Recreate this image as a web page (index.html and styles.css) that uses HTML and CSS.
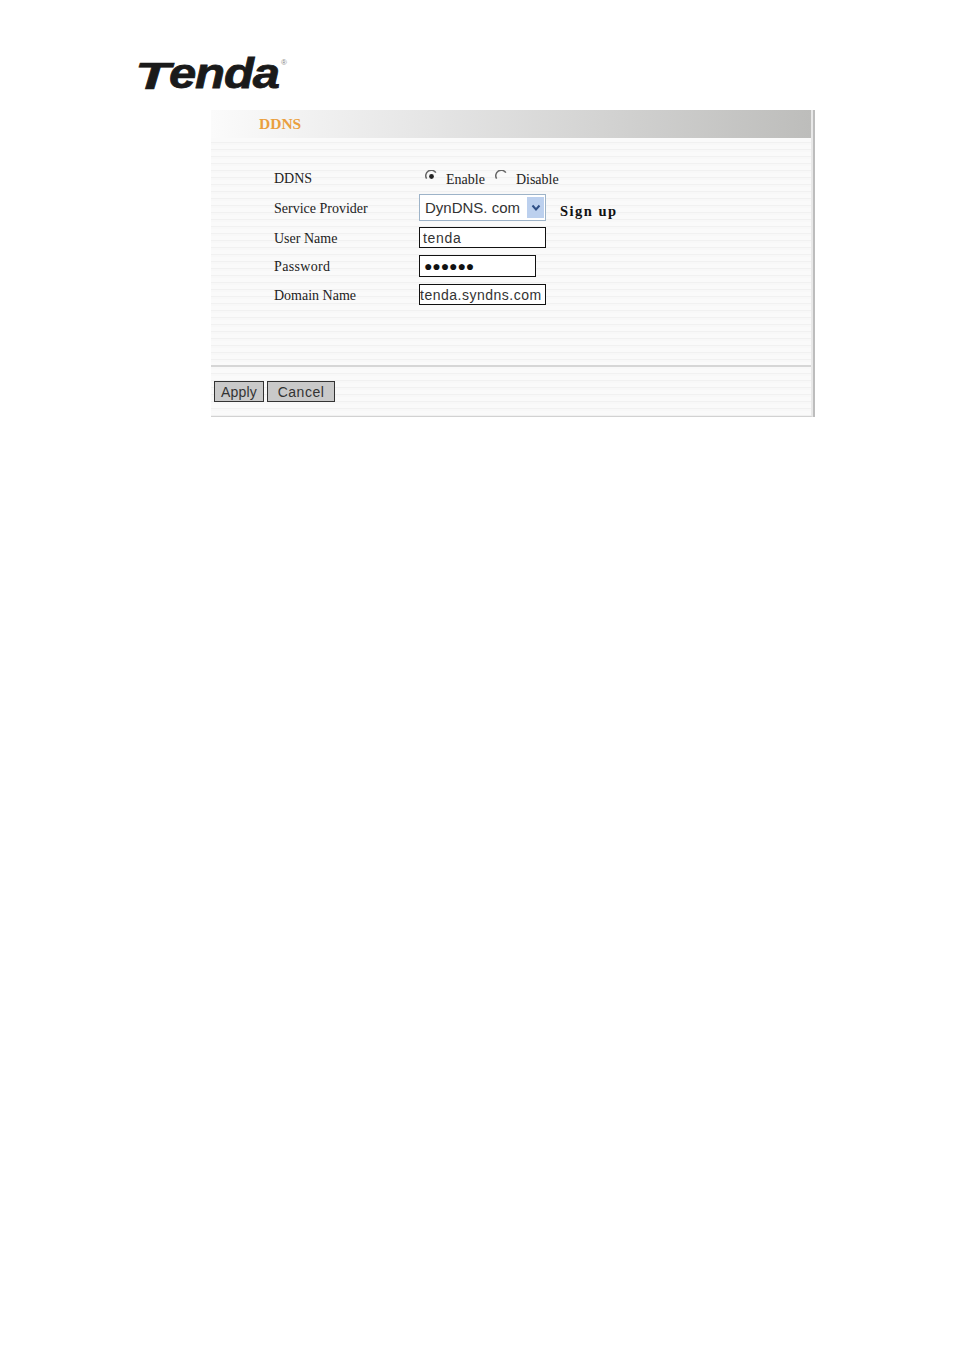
FILE: index.html
```html
<!DOCTYPE html>
<html lang="en">
<head>
  <meta charset="UTF-8" />
  <title>DDNS - Tenda</title>
  <link rel="stylesheet" href="styles.css">
</head>
<body>
  <div class="logo"><span class="logo-t">T</span><span class="logo-text">enda</span><span class="logo-mark">®</span></div>

  <div class="panel">
    <div class="panel-head">DDNS</div>

    <div class="form">
      <div class="row row-radio">
        <div class="label">DDNS</div>
        <div class="radios">
          <svg class="radio" viewBox="0 0 12 12"><path d="M10 2.5A5 5 0 0 0 1.5 8" /><circle cx="6" cy="6" r="2.2" /></svg>
          <span class="radio-text">Enable</span>
          <svg class="radio radio-off" viewBox="0 0 12 12"><path d="M10 2.5A5 5 0 0 0 1.5 8" /></svg>
          <span class="radio-text">Disable</span>
        </div>
      </div>

      <div class="row row-select">
        <div class="label">Service Provider</div>
        <div class="select">
          <span class="select-value">DynDNS. com</span>
          <span class="select-btn">
            <svg viewBox="0 0 10 8"><path d="M1.5 1.5 5 5.5 8.5 1.5" /></svg>
          </span>
        </div>
        <a class="signup">Sign up</a>
      </div>

      <div class="row row-user">
        <div class="label">User Name</div>
        <div class="input input-user">tenda</div>
      </div>

      <div class="row row-pass">
        <div class="label label-pass">Password</div>
        <div class="input input-short">●●●●●●</div>
      </div>

      <div class="row row-domain">
        <div class="label">Domain Name</div>
        <div class="input input-tight">tenda.syndns.com</div>
      </div>
    </div>

    <div class="actions">
      <div class="btn btn-apply">Apply</div>
      <div class="btn btn-cancel">Cancel</div>
    </div>
  </div>
</body>
</html>
```

FILE: styles.css
```css
html, body {
  margin: 0;
  background: #fff;
}
body {
  height: 1350px;
  padding: 50px 0 0 138px;
  box-sizing: border-box;
  color: #222;
  font-family: "Liberation Serif", serif;
  overflow: hidden;
}

.logo {
  display: flex;
  align-items: flex-end;
  height: 60px;
  width: 160px;
  padding-bottom: 15px;
  box-sizing: border-box;
  font-family: "Liberation Sans", sans-serif;
  font-weight: bold;
  font-style: italic;
  color: #1a1a1a;
}
.logo-t {
  display: block;
  width: 22px;
  margin: 0 12px 0 -3px;
  font-size: 36px;
  line-height: 36px;
  transform: scaleX(1.6);
  transform-origin: left bottom;
  -webkit-text-stroke: 0.6px #1a1a1a;
}
.logo-text {
  display: block;
  width: 99px;
  margin-right: 14px;
  font-size: 43px;
  line-height: 43px;
  letter-spacing: -1px;
  transform: scaleX(1.14);
  transform-origin: left bottom;
  -webkit-text-stroke: 0.8px #1a1a1a;
}
.logo-mark {
  align-self: flex-start;
  margin: 8px 0 0 -1px;
  font-size: 8px;
  font-style: normal;
  font-weight: normal;
  color: #888;
}

.panel {
  width: 600px;
  height: 306px;
  margin-left: 73px;
  border-right: 2px solid #e8e8e8;
  border-bottom: 1px solid #d2d2d2;
  box-shadow: 2px 0 0 #bdbdbd;
  background: repeating-linear-gradient(#fafafa 0 4px, #f1f1f1 4px 5px, #f8f8f8 5px 7px);
}
.panel-head {
  height: 28px;
  padding-left: 48px;
  font-size: 15.5px;
  font-weight: bold;
  line-height: 28px;
  color: #ea9f3e;
  background: linear-gradient(to right, #fbfbfb, #e6e6e6 35%, #bdbdbb 100%);
}

.form {
  height: 229px;
  box-sizing: border-box;
  padding-top: 26px;
  padding-left: 63px;
  border-bottom: 2px solid #d6d6d6;
}
.row {
  display: flex;
  align-items: center;
}
.row-radio { height: 27px; }
.row-select { height: 27px; margin-top: 3px; }
.row-user { height: 21px; margin-top: 6px; }
.row-pass { height: 22px; margin-top: 7px; }
.row-domain { height: 21px; margin-top: 7px; }

.label {
  width: 145px;
  margin-top: 2px;
  font-size: 14px;
  color: #222;
}
.label-pass {
  letter-spacing: 0.35px;
}

.radios {
  display: flex;
  align-items: center;
  font-size: 14px;
}
.radio {
  width: 13px;
  height: 13px;
  margin: -2px 0 0 6px;
  fill: none;
}
.radio path {
  stroke: #666;
  stroke-width: 1.4;
}
.radio circle {
  fill: #222;
}
.radio-off {
  margin-left: 10px;
}
.radio-text {
  margin-left: 8px;
  margin-top: 4px;
}

.select {
  display: flex;
  align-items: center;
  justify-content: space-between;
  width: 127px;
  height: 27px;
  box-sizing: border-box;
  padding: 2px 1px 2px 2px;
  border: 1px solid #9db3c8;
  background: #fff;
}
.select-value {
  padding-left: 3px;
  font-family: "Liberation Sans", sans-serif;
  font-size: 15px;
  white-space: nowrap;
  color: #333;
}
.select-btn {
  display: flex;
  align-items: center;
  justify-content: center;
  width: 17px;
  height: 21px;
  background: #bcd0ee;
}
.select-btn svg {
  width: 10px;
  height: 8px;
  fill: none;
  stroke: #2f4f86;
  stroke-width: 2;
}
.signup {
  margin: 8px 0 0 14px;
  font-size: 14.5px;
  font-weight: bold;
  letter-spacing: 1.5px;
  color: #111;
}

.input {
  width: 127px;
  height: 21px;
  box-sizing: border-box;
  padding-left: 3px;
  border: 1px solid #111;
  background: #fff;
  font-family: "Liberation Sans", sans-serif;
  font-size: 14px;
  line-height: 20px;
  color: #333;
  white-space: nowrap;
}
.input-user {
  letter-spacing: 0.7px;
}
.input-short {
  width: 117px;
  height: 22px;
  padding-left: 4px;
  font-size: 14px;
  letter-spacing: -0.1px;
  color: #111;
}
.input-tight {
  padding-left: 0;
  letter-spacing: 0.5px;
}

.actions {
  display: flex;
  gap: 3px;
  padding: 14px 0 0 3px;
}
.btn {
  height: 21px;
  box-sizing: border-box;
  border: 1px solid #333;
  background: #c9c9c9;
  font-family: "Liberation Sans", sans-serif;
  font-size: 14px;
  line-height: 20px;
  text-align: center;
  color: #333;
}
.btn-apply { width: 50px; letter-spacing: 0.2px; }
.btn-cancel { width: 68px; letter-spacing: 0.5px; }
```
